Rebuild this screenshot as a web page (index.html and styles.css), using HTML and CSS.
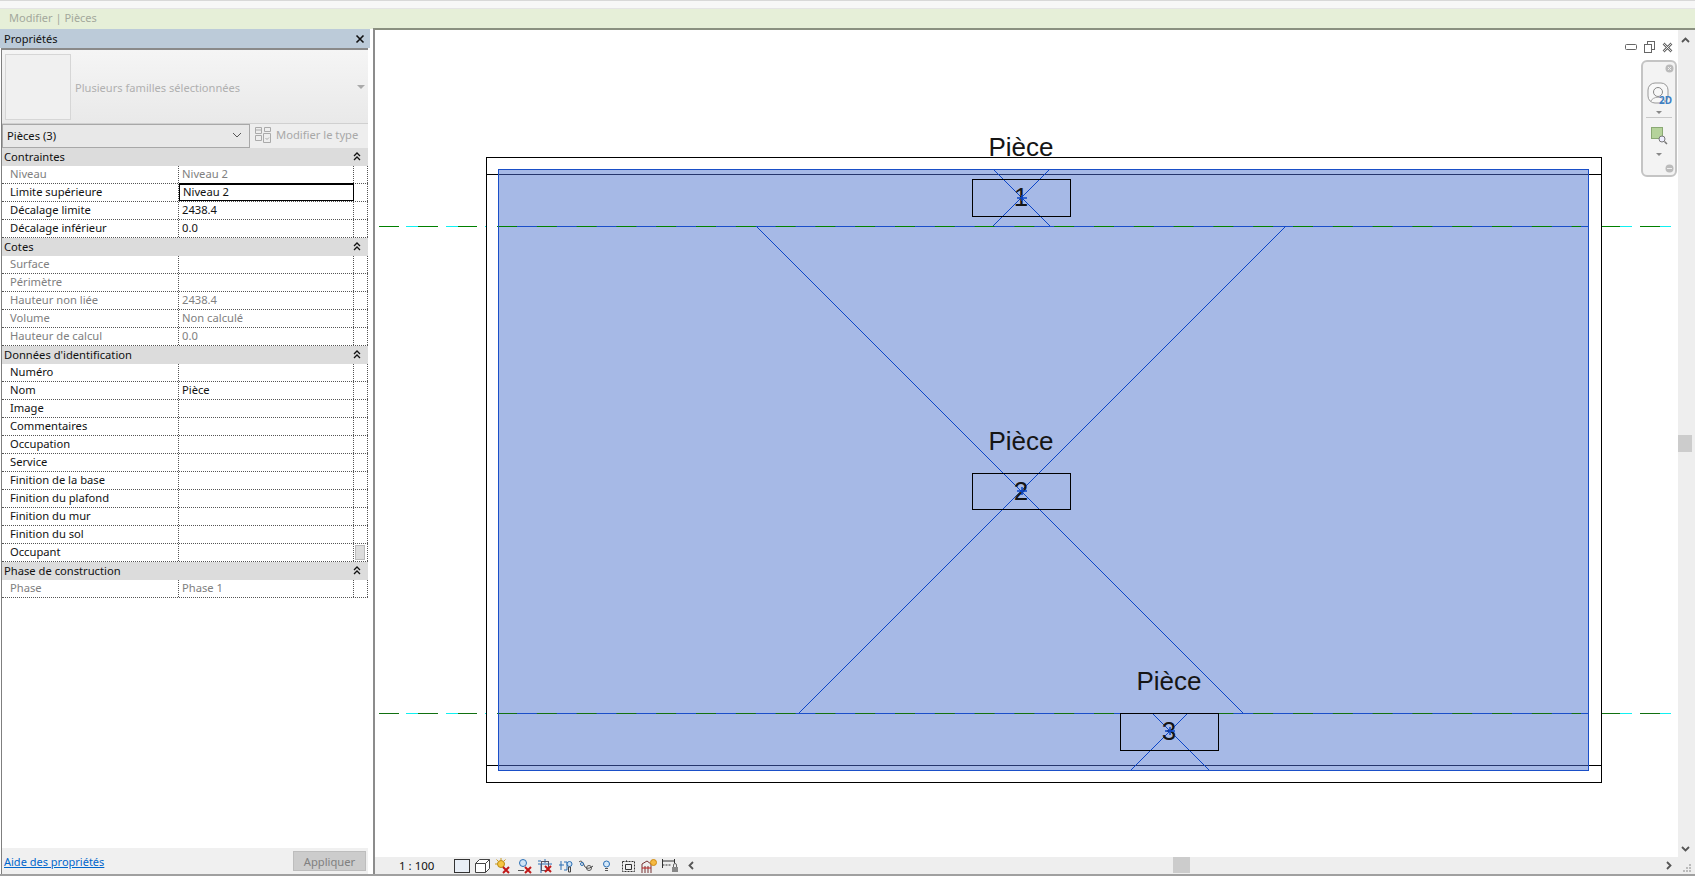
FILE: index.html
```html
<!DOCTYPE html>
<html lang="fr">
<head>
    <meta charset="UTF-8">
    <title>Modifier | Pièces</title>
    <link rel="stylesheet" href="styles.css">
</head>
<body>
    <div class="top-strip"></div>
    <div class="context-bar">Modifier | Pièces</div>

    <div class="main">
        <!-- Propriétés -->
        <div class="panel">
            <div class="panel-title">
                <span>Propriétés</span>
                <svg class="panel-close" width="10" height="10" viewBox="0 0 10 10"><path d="M1.5 1.5l7 7M8.5 1.5l-7 7" stroke="#111" stroke-width="1.600"/></svg>
            </div>
            <div class="panel-body">
                <div class="type-box">
                    <div class="type-thumb"></div>
                    <div class="type-name">Plusieurs familles sélectionnées</div>
                    <div class="type-arrow"></div>
                </div>
                <div class="filter-row">
                    <div class="filter-select">
                        <span>Pièces (3)</span>
                        <svg width="10" height="6" viewBox="0 0 10 6"><path d="M1 1l4 4 4-4" fill="none" stroke="#555"/></svg>
                    </div>
                    <div class="edit-type">
                        <svg width="16" height="17" viewBox="0 0 16 17" fill="none" stroke="#aaa"><path d="M.5 1.500h6v6h-6zM.5 4h6M9.500 1.500h6v4h-6zM.5 9.500h6v5h-6zM8.500 7.500h7v9h-7zM10.500 12l1.500 1.500 2-2"/></svg>
                        <span>Modifier le type</span>
                    </div>
                </div>

                <div class="section"><span>Contraintes</span><svg class="fold" viewBox="0 0 8 9"><path d="M1 4l3-3 3 3M1 8l3-3 3 3" fill="none" stroke="#111" stroke-width="1.300"/></svg></div>
                <div class="row off"><div>Niveau</div><div>Niveau 2</div><div></div></div>
                <div class="row"><div>Limite supérieure</div><div class="active">Niveau 2</div><div></div></div>
                <div class="row"><div>Décalage limite</div><div>2438.4</div><div></div></div>
                <div class="row"><div>Décalage inférieur</div><div>0.0</div><div></div></div>

                <div class="section"><span>Cotes</span><svg class="fold" viewBox="0 0 8 9"><path d="M1 4l3-3 3 3M1 8l3-3 3 3" fill="none" stroke="#111" stroke-width="1.300"/></svg></div>
                <div class="row off"><div>Surface</div><div></div><div></div></div>
                <div class="row off"><div>Périmètre</div><div></div><div></div></div>
                <div class="row off"><div>Hauteur non liée</div><div>2438.4</div><div></div></div>
                <div class="row off"><div>Volume</div><div>Non calculé</div><div></div></div>
                <div class="row off"><div>Hauteur de calcul</div><div>0.0</div><div></div></div>

                <div class="section"><span>Données d'identification</span><svg class="fold" viewBox="0 0 8 9"><path d="M1 4l3-3 3 3M1 8l3-3 3 3" fill="none" stroke="#111" stroke-width="1.300"/></svg></div>
                <div class="row"><div>Numéro</div><div></div><div></div></div>
                <div class="row"><div>Nom</div><div>Pièce</div><div></div></div>
                <div class="row"><div>Image</div><div></div><div></div></div>
                <div class="row"><div>Commentaires</div><div></div><div></div></div>
                <div class="row"><div>Occupation</div><div></div><div></div></div>
                <div class="row"><div>Service</div><div></div><div></div></div>
                <div class="row"><div>Finition de la base</div><div></div><div></div></div>
                <div class="row"><div>Finition du plafond</div><div></div><div></div></div>
                <div class="row"><div>Finition du mur</div><div></div><div></div></div>
                <div class="row"><div>Finition du sol</div><div></div><div></div></div>
                <div class="row"><div>Occupant</div><div></div><div class="thumb-cell"><div class="list-thumb"></div></div></div>

                <div class="section"><span>Phase de construction</span><svg class="fold" viewBox="0 0 8 9"><path d="M1 4l3-3 3 3M1 8l3-3 3 3" fill="none" stroke="#111" stroke-width="1.300"/></svg></div>
                <div class="row off"><div>Phase</div><div>Phase 1</div><div></div></div>

                <div class="panel-space"></div>
                <div class="panel-foot">
                    <a href="#" class="help-link">Aide des propriétés</a>
                    <button class="apply-btn">Appliquer</button>
                </div>
            </div>
        </div>

        <!-- Vue -->
        <div class="view">
            <div class="view-top">
                <div class="canvas">
                    <svg class="plan" width="1303" height="827" viewBox="375 30 1303 827">
                        <!-- lignes de niveau -->
                        <path class="dash-green" d="M379 226.500h20M418 226.500h20M458 226.500h19M1601 226.500h19M1640 226.500h20"/>
                        <path class="dash-cyan" d="M406 226.500h12M446 226.500h12M485 226.500h2M1620 226.500h12M1660 226.500h11"/>
                        <path class="dash-dark" d="M379 713.500h20M418 713.500h20M458 713.500h19M1601 713.500h19M1640 713.500h20"/>
                        <path class="dash-cyan" d="M406 713.500h12M446 713.500h12M485 713.500h2M1620 713.500h12M1660 713.500h11"/>

                        <rect class="outline" x="486.500" y="157.500" width="1115" height="625"/>
                        <path class="outline" d="M486.500 174.500H1601.500M486.500 765.500H1601.500"/>

                        <rect class="room-fill" x="498.500" y="169.500" width="1090" height="601"/>
                        <path class="wall-under" d="M498.500 174.500H1588.500M498.500 765.500H1588.500"/>

                        <path class="room-line" d="M498.500 226.500H1588.500M498.500 713.500H1588.500"/>
                        <path class="dash-green" stroke-dasharray="20 19.800" d="M497 226.500H1581"/>
                        <path class="dash-dark" stroke-dasharray="20 19.800" d="M497 713.500H1581"/>
                        <rect class="room-edge" x="498.500" y="169.500" width="1090" height="601"/>

                        <path class="diag" d="M756 226L1243 713M1286 226L799 713M994 170L1050 226M1049 170L993 226M1152 713L1209 770M1188 713L1131 770"/>

                        <rect class="outline" x="972.500" y="179.500" width="98" height="37"/>
                        <rect class="outline" x="972.500" y="473.500" width="98" height="36"/>
                        <rect class="outline" x="1120.500" y="713.500" width="98" height="37"/>

                        <text class="room-text" x="1021" y="156">Pièce</text>
                        <text class="room-text" x="1021" y="206">1</text>
                        <text class="room-text" x="1021" y="500">2</text>
                        <text class="room-text" x="1021" y="450">Pièce</text>
                        <text class="room-text" x="1169" y="690">Pièce</text>
                        <text class="room-text" x="1169" y="740">3</text>

                        <path class="mark" d="M1017 198h10M1022 195v6M1017 491h10M1022 487v8M1165 731h10M1170 727v8"/>
                    </svg>

                    <div class="win-controls">
                        <svg width="12" height="6" viewBox="0 0 12 6"><rect x=".5" y=".5" width="11" height="5" rx="1" fill="#fff" stroke="#666"/></svg>
                        <svg width="11" height="12" viewBox="0 0 11 12" fill="#fff" stroke="#666"><rect x="3.500" y=".5" width="7" height="8"/><rect x=".5" y="3.500" width="7" height="8"/></svg>
                        <svg width="11" height="11" viewBox="0 0 11 11"><path d="M1.500 1.500l8 8M9.500 1.500l-8 8" stroke="#666" stroke-width="2.500"/><path d="M1.500 1.500l8 8M9.500 1.500l-8 8" stroke="#fff" stroke-width=".8"/></svg>
                    </div>

                    <div class="nav-bar">
                        <svg class="nav-round nav-round-top" width="9" height="9" viewBox="0 0 9 9"><circle cx="4.500" cy="4.500" r="4" fill="#bbb"/><path d="M3 3l3 3M6 3L3 6" stroke="#eee"/></svg>
                        <svg class="nav-wheel" width="26" height="26" viewBox="0 0 26 26" fill="none"><rect x="1" y="1" width="20" height="20" rx="7" fill="#f8f8f8" stroke="#999"/><circle cx="11" cy="10" r="4.500" stroke="#888"/><path d="M4 19c2-5 12-5 14 0" stroke="#aaa"/></svg>
                        <span class="nav-2d">2D</span>
                        <i class="nav-tri nav-tri-a"></i>
                        <div class="nav-sep"></div>
                        <svg class="nav-zoom" width="17" height="18" viewBox="0 0 17 18" fill="none"><rect x=".5" y=".5" width="11" height="11" fill="#b5d39b" stroke="#8aa974"/><circle cx="11" cy="12" r="3" fill="#eef" stroke="#777"/><path d="M13.500 14.500L16 17" stroke="#777" stroke-width="1.500"/></svg>
                        <i class="nav-tri nav-tri-b"></i>
                        <svg class="nav-round nav-round-bot" width="9" height="9" viewBox="0 0 9 9"><circle cx="4.500" cy="4.500" r="4" fill="#bbb"/><path d="M2 4.500h5" stroke="#eee"/></svg>
                    </div>
                </div>
                <div class="vscroll">
                    <svg class="scroll-up" width="9" height="6" viewBox="0 0 9 6"><path d="M1 5l3.500-3.500L8 5" fill="none" stroke="#555" stroke-width="1.800"/></svg>
                    <div class="vthumb"></div>
                    <svg class="scroll-down" width="9" height="6" viewBox="0 0 9 6"><path d="M1 1l3.500 3.500L8 1" fill="none" stroke="#555" stroke-width="1.800"/></svg>
                </div>
            </div>
            <div class="status">
                <span class="scale">1 : 100</span>
                <div class="status-icons">
                    <svg width="16" height="14" viewBox="0 0 16 14"><rect x=".5" y=".5" width="15" height="13" fill="#e8eef6" stroke="#333"/></svg>
                    <svg width="15" height="15" viewBox="0 0 15 15" fill="#fff" stroke="#444"><path d="M.5 5.500l4-4h10v9l-4 4H.5zM.5 5.500h10v9M10.500 5.500l4-4"/></svg>
                    <svg width="15" height="16" viewBox="0 0 15 16"><circle cx="6" cy="6" r="3.500" fill="#f5c542" stroke="#b98a10"/><path d="M6 0v2M0 6h2M1.500 1.500l1.500 1.500M10.500 1.500L9 3" stroke="#c99a20"/><path d="M8 9l6 6M14 9l-6 6" stroke="#c01818" stroke-width="2"/></svg>
                    <svg class="gap-s" width="14" height="16" viewBox="0 0 14 16" fill="none"><circle cx="5" cy="5" r="3.500" stroke="#2a6fb5" fill="#cfe3f5"/><path d="M0 12.500h6" stroke="#555"/><path d="M7 9l6 6M13 9l-6 6" stroke="#c01818" stroke-width="2"/></svg>
                    <svg width="16" height="16" viewBox="0 0 16 16" fill="none"><path d="M1 6h14M4 6v9M1 3h3M8 1v4" stroke="#2a6fb5"/><rect x="4.500" y="3.500" width="7" height="9" stroke="#556"/><path d="M8 8l6 6M14 8l-6 6" stroke="#c01818" stroke-width="2"/></svg>
                    <svg width="15" height="16" viewBox="0 0 15 16" fill="none"><path d="M1 7h5M3 3v9M6 4h3v8H6" stroke="#2a6fb5"/><circle cx="11.500" cy="6" r="2.500" stroke="#2a6fb5" fill="#cfe3f5"/><path d="M10.500 9h2v5h-2z" stroke="#444"/></svg>
                    <svg width="16" height="14" viewBox="0 0 16 14" fill="none"><path d="M1 3c2-2 4 0 5 3s4 5 9 1" stroke="#444"/><circle cx="11" cy="9" r="2.500" stroke="#555"/><circle cx="4" cy="5" r="1.500" stroke="#2a6fb5"/></svg>
                    <svg class="gap-m" width="7" height="14" viewBox="0 0 7 14" fill="none"><circle cx="3.500" cy="5" r="3" fill="#d5e9fa" stroke="#2a6fb5"/><path d="M2 9.500h3M2 11.500h3" stroke="#555"/></svg>
                    <svg class="gap-l" width="15" height="14" viewBox="0 0 15 14" fill="none"><path d="M1.500 2.500h12v10h-12z" stroke="#333" stroke-dasharray="2 1"/><path d="M4.500 5.500h6v5h-6z" stroke="#333"/><path d="M5 1l2 2" stroke="#777"/></svg>
                    <svg width="16" height="16" viewBox="0 0 16 16" fill="none"><path d="M1 15V6l5-3 4 3v9M4 15V8M7 15V8" stroke="#733"/><path d="M1 10h9" stroke="#c01818"/><circle cx="12.500" cy="4.500" r="3" fill="#f5b942" stroke="#d08a10"/></svg>
                    <svg width="17" height="15" viewBox="0 0 17 15" fill="none"><path d="M.5 1v9M12.500 1v4M.5 3h12" stroke="#333"/><path d="M.5 7h9" stroke="#333" stroke-dasharray="2 1"/><rect x="10" y="9" width="6" height="5" fill="#888"/><path d="M11.500 9V7a1.500 1.500 0 0 1 3 0v2" stroke="#666"/></svg>
                    <svg class="gap-m" width="6" height="9" viewBox="0 0 6 9"><path d="M5 1L1.500 4.500 5 8" fill="none" stroke="#555" stroke-width="1.800"/></svg>
                </div>
                <div class="hthumb"></div>
                <svg class="status-right" width="6" height="9" viewBox="0 0 6 9"><path d="M1 1l3.500 3.500L1 8" fill="none" stroke="#555" stroke-width="1.800"/></svg>
                <svg class="grip" width="9" height="8" viewBox="0 0 9 8" fill="#bbb"><rect x="6" width="2" height="2"/><rect x="3" y="3" width="2" height="2"/><rect x="6" y="3" width="2" height="2"/><rect y="6" width="2" height="2"/><rect x="3" y="6" width="2" height="2"/><rect x="6" y="6" width="2" height="2"/></svg>
            </div>
        </div>
    </div>

    <div class="bottom-line"></div>
</body>
</html>
```

FILE: styles.css
```css
* {
    box-sizing: border-box;
}

body {
    margin: 0;
    width: 1695px;
    height: 877px;
    overflow: hidden;
    background-color: white;
    font-family: "Noto Sans", "Liberation Sans", sans-serif;
    font-size: 11.2px;
    color: #111;
}

.top-strip {
    height: 9px;
    background-color: #f7f7f7;
    border-top: 1px solid #d8d8d8;
    border-bottom: 1px solid #e4e4e4;
}

.context-bar {
    height: 20px;
    padding: 0 0 3px 9px;
    display: flex;
    align-items: center;
    background-color: #e6efd8;
    color: #a3a89c;
    font-size: 11px;
}

.main {
    display: flex;
    height: 845px;
}

/* panneau des propriétés */
.panel {
    width: 370px;
    display: flex;
    flex-direction: column;
}

.panel-title {
    height: 19px;
    padding: 0 4px;
    display: flex;
    align-items: center;
    justify-content: space-between;
    background-color: #bccbd9;
    font-size: 11px;
}

.panel-close {
    margin-right: 1px;
}

.panel-body {
    flex: 1;
    display: flex;
    flex-direction: column;
    margin: 0 2px 0 1px;
    border-left: 1px solid #7f7f7f;
    border-top: 2px solid #8a8a8a;
}

.type-box {
    height: 74px;
    padding: 3px 0 3px 3px;
    display: flex;
    align-items: center;
    background: linear-gradient(#f5f5f5, #e9e9e9);
    border-bottom: 1px solid #d0d0d0;
}

.type-thumb {
    width: 66px;
    height: 66px;
    border: 1px solid #d6d6d6;
    background-color: #f0f0f0;
}

.type-name {
    flex: 1;
    margin: 2px 0 0 4px;
    font-size: 11.100px;
    color: #b0b0b0;
}

.type-arrow {
    margin-right: 3px;
    border-left: 4px solid transparent;
    border-right: 4px solid transparent;
    border-top: 4px solid #aaa;
}

.filter-row {
    height: 24px;
    display: flex;
    background-color: #eeeeee;
}

.filter-select {
    width: 248px;
    padding: 0 7px 2px 4px;
    display: flex;
    align-items: center;
    justify-content: space-between;
    background-color: #e8e8e8;
    border: 1px solid #a8a8a8;
}

.edit-type {
    margin-left: 5px;
    padding-bottom: 3px;
    display: flex;
    align-items: center;
    gap: 5px;
    color: #a8a8a8;
}

.section {
    height: 18px;
    padding: 0 6px 2px 2px;
    display: flex;
    align-items: center;
    justify-content: space-between;
    background-color: #dcdcdc;
    flex-shrink: 0;
}

.fold {
    width: 8px;
    height: 9px;
    margin-right: 1px;
}

.row {
    height: 18px;
    display: grid;
    grid-template-columns: 177px 175px 1fr;
    flex-shrink: 0;
    background-color: white;
    border-bottom: 1px dotted #555;
}

.row > div {
    padding-left: 8px;
    line-height: 16px;
    white-space: nowrap;
    border-right: 1px dotted #555;
}

.row > div:nth-child(2) {
    padding-left: 3px;
}

.row .active {
    margin: -1px 0 0 0;
    height: 18px;
    border: 1px solid black;
    border-top-width: 2px;
    padding-left: 2px;
    line-height: 14px;
    position: relative;
}

.row.off {
    color: #808080;
}

.thumb-cell {
    position: relative;
}

.list-thumb {
    position: absolute;
    left: 1px;
    top: 1px;
    width: 10px;
    height: 15px;
    background-color: #dcdcdc;
    border: 1px solid #bbb;
}

.panel-space {
    flex: 1;
    background-color: white;
}

.panel-foot {
    height: 26px;
    padding: 3px 2px 3px 2px;
    display: flex;
    align-items: center;
    justify-content: space-between;
    background-color: #f0f0f0;
    flex-shrink: 0;
}

.help-link {
    color: #0066cc;
    font-size: 11px;
}

.apply-btn {
    width: 73px;
    height: 20px;
    padding: 0;
    background-color: #cccccc;
    border: 1px solid #bdbdbd;
    color: #808080;
    font-family: inherit;
    font-size: 11.2px;
}

/* vue en plan */
.view {
    width: 1322px;
    margin-left: 3px;
    margin-top: -1px;
    display: flex;
    flex-direction: column;
    border-left: 2px solid #8c8c8c;
    border-top: 2px solid #8a9080;
}

.view-top {
    flex: 1;
    display: flex;
}

.canvas {
    width: 1303px;
    position: relative;
    background-color: white;
}

.plan {
    display: block;
}

.outline {
    fill: none;
    stroke: black;
}

.room-fill {
    fill: #a6b9e6;
}

.room-edge {
    fill: none;
    stroke: #1a4fc8;
}

.room-line {
    stroke: #1a4fc8;
    fill: none;
}

.wall-under {
    stroke: #25356b;
    fill: none;
}

.dash-green {
    stroke: #008000;
    fill: none;
}

.dash-dark {
    stroke: #117011;
    fill: none;
}

.dash-cyan {
    stroke: #11f0f0;
    fill: none;
}

.diag {
    stroke: #0b45c8;
    fill: none;
    shape-rendering: crispEdges;
}

.mark {
    stroke: #0b45c8;
    stroke-width: 1.5;
    fill: none;
}

.room-text {
    font-family: "Liberation Sans", Arial, sans-serif;
    font-size: 26px;
    text-anchor: middle;
    fill: #151515;
}

.win-controls {
    position: absolute;
    right: 5px;
    top: 11px;
    display: flex;
    align-items: center;
    gap: 7px;
}

.nav-bar {
    position: absolute;
    left: 1266px;
    top: 30px;
    width: 36px;
    height: 117px;
    background-color: #f3f3f3;
    border: 2px solid #c4c4c4;
    border-radius: 6px;
}

.nav-round,
.nav-wheel,
.nav-2d,
.nav-tri,
.nav-sep,
.nav-zoom {
    position: absolute;
}

.nav-round-top {
    left: 22px;
    top: 2px;
}

.nav-round-bot {
    left: 22px;
    bottom: 2px;
}

.nav-wheel {
    left: 4px;
    top: 20px;
}

.nav-2d {
    left: 16px;
    top: 31px;
    color: #3d7fc4;
    font-size: 10px;
    font-weight: bold;
}

.nav-tri {
    left: 13px;
    border-left: 3px solid transparent;
    border-right: 3px solid transparent;
    border-top: 3px solid #888;
}

.nav-tri-a {
    top: 49px;
}

.nav-tri-b {
    top: 91px;
}

.nav-sep {
    left: 3px;
    top: 55px;
    width: 26px;
    height: 1px;
    background-color: #c8c8c8;
}

.nav-zoom {
    left: 8px;
    top: 65px;
}

.vscroll {
    flex: 1;
    position: relative;
    background-color: #eeeeee;
}

.scroll-up {
    position: absolute;
    left: 3px;
    top: 7px;
}

.scroll-down {
    position: absolute;
    left: 3px;
    bottom: 5px;
}

.vthumb {
    position: absolute;
    left: 0;
    top: 405px;
    width: 14px;
    height: 17px;
    background-color: #cccccc;
}

.status {
    height: 17px;
    padding-left: 24px;
    display: flex;
    align-items: center;
    position: relative;
    background-color: #eeeeee;
}

.scale {
    width: 55px;
    font-size: 11.5px;
}

.status-icons {
    display: flex;
    align-items: center;
    gap: 5px;
}

.gap-s {
    margin-left: 3px;
}

.gap-m {
    margin-left: 4px;
}

.gap-l {
    margin-left: 6px;
}

.hthumb {
    position: absolute;
    left: 798px;
    top: 0;
    width: 17px;
    height: 16px;
    background-color: #cccccc;
}

.status-right {
    position: absolute;
    left: 1291px;
    top: 4px;
}

.grip {
    position: absolute;
    right: 3px;
    bottom: 2px;
}

.bottom-line {
    height: 2px;
    background-color: #a0a0a0;
}
```
